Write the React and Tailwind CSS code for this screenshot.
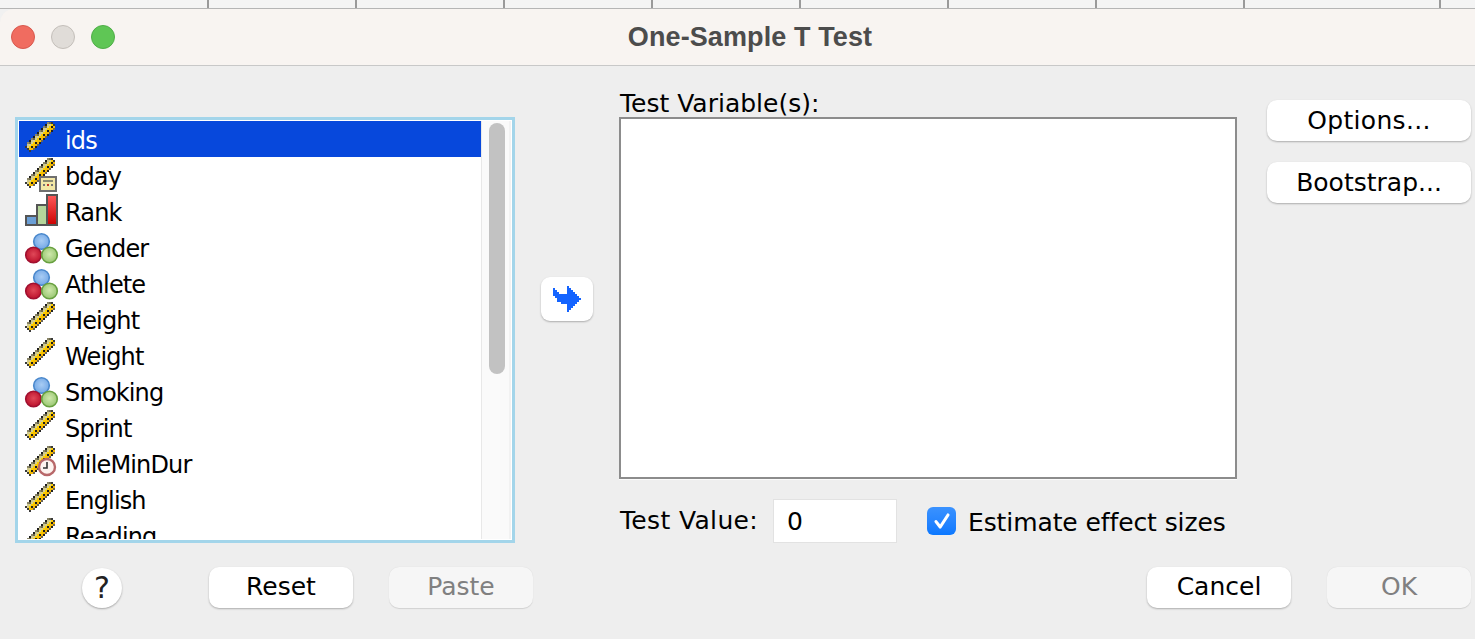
import React from 'react'

const FONT = 'font-["DejaVu_Sans",sans-serif]'

const VARIABLES = [
  { name: 'ids', type: 'scale' },
  { name: 'bday', type: 'date' },
  { name: 'Rank', type: 'ordinal' },
  { name: 'Gender', type: 'nominal' },
  { name: 'Athlete', type: 'nominal' },
  { name: 'Height', type: 'scale' },
  { name: 'Weight', type: 'scale' },
  { name: 'Smoking', type: 'nominal' },
  { name: 'Sprint', type: 'scale' },
  { name: 'MileMinDur', type: 'time' },
  { name: 'English', type: 'scale' },
  { name: 'Reading', type: 'scale' },
]

// pixel ruler, drawn on a 16x16 grid
function rulerPixels() {
  const out = []
  for (let x = 0; x < 16; x++) {
    for (let y = 0; y < 16; y++) {
      const d = x + y - 14
      const a = x - y
      if (Math.abs(d) > 3 || a < -12 || a > 13) continue
      if (Math.abs(d) === 3 && (a === 13 || a === -11)) continue
      let fill = '#f9c200'
      if (d === -3) fill = (a + 1) % 4 === 0 ? '#8a866a' : '#1c1c1c'
      else if (d === 3) fill = (a + 1) % 4 === 0 ? '#6a6458' : '#222222'
      else if (d === -2) fill = a % 4 === 0 ? '#6a664a' : '#cfc88c'
      else if (d === -1) fill = '#d8cf8e'
      else if (d === 0) fill = '#fdcf00'
      else if (d === 1) fill = (a + 1) % 4 === 0 ? '#1c1c1c' : '#f9c200'
      else if (d === 2) fill = '#f6b800'
      if (a === -12 || a === 13) fill = '#3a3a3a'
      out.push(<rect key={`${x}-${y}`} x={x} y={y} width="1" height="1" fill={fill} />)
    }
  }
  return out
}

function VarIcon({ type }) {
  if (type === 'ordinal') {
    return (
      <svg viewBox="0 0 32 32" className="w-8 h-8 shrink-0 overflow-visible">
        <rect x="1" y="22" width="11" height="9" fill="#6b9fd6" stroke="#555" strokeWidth="2" />
        <rect x="12" y="11" width="11" height="20" fill="#b5d69a" stroke="#555" strokeWidth="2" />
        <rect x="22" y="1" width="10" height="30" fill="url(#redBar)" stroke="#555" strokeWidth="2" />
      </svg>
    )
  }
  if (type === 'nominal') {
    return (
      <svg viewBox="0 0 32 32" className="w-8 h-8 shrink-0 overflow-visible">
        <circle cx="16.5" cy="11.5" r="7.8" fill="url(#blueBall)" stroke="#4a88cc" strokeWidth="1.6" />
        <circle cx="8.5" cy="25" r="7.8" fill="url(#redBall)" stroke="#a01030" strokeWidth="1.6" />
        <circle cx="24.5" cy="25" r="7.8" fill="url(#greenBall)" stroke="#68a040" strokeWidth="1.6" />
      </svg>
    )
  }
  return (
    <svg viewBox="0 0 16 16" className="w-8 h-8 shrink-0 overflow-visible" shapeRendering="crispEdges">
      {rulerPixels()}
      {type === 'date' && (
        <g>
          <rect x="7" y="9" width="9" height="8" fill="#6f6f6f" />
          <rect x="8" y="10" width="7" height="6" fill="#f3e8a6" />
          <rect x="9" y="11" width="5" height="1" fill="#8a8a70" />
          <rect x="9" y="13" width="1" height="1" fill="#777" />
          <rect x="11" y="13" width="1" height="1" fill="#c0392b" />
          <rect x="13" y="13" width="1" height="1" fill="#777" />
        </g>
      )}
      {type === 'time' && (
        <g shapeRendering="auto">
          <circle cx="11" cy="10.5" r="4" fill="#fdf3ef" stroke="#b8686a" strokeWidth="1.2" />
          <path d="M11 8v3h-2" fill="none" stroke="#333" strokeWidth="0.8" />
        </g>
      )}
    </svg>
  )
}

function IconDefs() {
  return (
    <svg className="w-0 h-0 block">
      <defs>
        <linearGradient id="redBar" x1="0" y1="0" x2="0" y2="1">
          <stop offset="0" stopColor="#ff5a5a" />
          <stop offset="1" stopColor="#cc0000" />
        </linearGradient>
        <radialGradient id="blueBall" cx="0.5" cy="0.45" r="0.6">
          <stop offset="0" stopColor="#a8ccf4" />
          <stop offset="1" stopColor="#6ea4e4" />
        </radialGradient>
        <radialGradient id="redBall" cx="0.5" cy="0.45" r="0.6">
          <stop offset="0" stopColor="#e04858" />
          <stop offset="1" stopColor="#b80c28" />
        </radialGradient>
        <radialGradient id="greenBall" cx="0.5" cy="0.45" r="0.6">
          <stop offset="0" stopColor="#cfe8ac" />
          <stop offset="1" stopColor="#94c46c" />
        </radialGradient>
      </defs>
    </svg>
  )
}

function ArrowIcon() {
  const rows = [
    [[7, 8]],
    [[0, 1], [7, 9]],
    [[0, 2], [7, 10]],
    [[0, 3], [7, 11]],
    [[0, 12]],
    [[1, 13]],
    [[2, 14]],
    [[2, 13]],
    [[4, 12]],
    [[7, 11]],
    [[7, 10]],
    [[7, 9]],
    [[7, 8]],
  ]
  return (
    <svg viewBox="0 0 14 13" className="w-7 h-[26px]" shapeRendering="crispEdges">
      {rows.map((spans, y) =>
        spans.map(([a, b]) => (
          <rect key={`${y}-${a}`} x={a} y={y} width={b - a} height="1" fill="#1464ff" />
        ))
      )}
    </svg>
  )
}

function Btn({ children, disabled, className = '' }) {
  return (
    <button
      className={`h-[41px] rounded-[10px] text-[25px] leading-none flex items-center justify-center ${
        disabled ? 'bg-[#f6f6f6] text-[#808080] shadow-[0_0.5px_1px_rgba(0,0,0,0.12)]' : 'bg-white text-black shadow-[0_1px_2px_rgba(0,0,0,0.28)]'
      } ${className}`}
    >
      {children}
    </button>
  )
}

export default function App() {
  return (
    <div className={`w-[1475px] h-[639px] overflow-hidden bg-[#f1f1f1] flex flex-col ${FONT}`}>
      <IconDefs />
      {/* window behind the dialog */}
      <div className="h-[9px] shrink-0 flex border-b border-[#b5b5b5] bg-[#f4f4f4]">
        <div className="w-[209px] border-r-2 border-[#9a9a9a]" />
        {[0, 1, 2, 3, 4, 5, 6].map((i) => (
          <div key={i} className="w-[148px] border-r-2 border-[#9a9a9a]" />
        ))}
        <div className="w-[196px] border-r-2 border-[#9a9a9a]" />
      </div>

      <div className="flex-1 flex flex-col rounded-tl-[14px] overflow-hidden bg-[#eeeeee]">
        {/* title bar */}
        <div className="h-[57px] shrink-0 bg-[#f8f4f1] border-b border-[#c8c8c8] flex items-center pl-[11px]">
          <div className="w-6 h-6 rounded-full bg-[#f06c60] border border-[#d8584e]" />
          <div className="w-6 h-6 rounded-full bg-[#e0dcd8] border border-[#c4bfba] ml-4" />
          <div className="w-6 h-6 rounded-full bg-[#5fc655] border border-[#4fae48] ml-4" />
          <div className="flex-1 text-center text-[27px] tracking-[0.1px] font-bold text-[#4c4c4c] font-['Liberation_Sans',sans-serif] pr-[90px]">
            One-Sample T Test
          </div>
        </div>

        <div className="flex pl-[15px]">
          {/* source variable list */}
          <div className="w-[500px] h-[426px] mt-[51px] shrink-0 border-[3px] border-[#a3d5ea] bg-white p-px flex overflow-hidden">
            <div className="w-[462px] shrink-0 overflow-hidden">
              {VARIABLES.map((v, i) => (
                <div
                  key={v.name}
                  className={`h-9 shrink-0 flex items-start pl-[6px] ${i === 0 ? 'bg-[#0748dc] text-white' : 'text-black'}`}
                >
                  <div className="pt-px">
                    <VarIcon type={v.type} />
                  </div>
                  <span className="ml-2 text-[24px] tracking-[-0.85px] leading-9 pt-[2px]">{v.name}</span>
                </div>
              ))}
            </div>
            <div className="flex-1 bg-[#fafafa] border-l border-[#e8e8e8] border-r-2 border-r-[#f2f2f2] pl-[7px] pt-[2px]">
              <div className="w-4 h-[251px] rounded-full bg-[#c2c2c2]" />
            </div>
          </div>

          {/* move button */}
          <div className="w-[104px] shrink-0 pl-[26px] pt-[211px]">
            <button className="w-[52px] h-[44px] rounded-[9px] bg-white shadow-[0_1px_2px_rgba(0,0,0,0.28)] flex items-center justify-center">
              <ArrowIcon />
            </button>
          </div>

          {/* test variables */}
          <div className="w-[618px] shrink-0 pt-[21px]">
            <div className="text-[25px] leading-[30px] pl-px pt-[2px] -mb-[2px] text-black">Test Variable(s):</div>
            <div className="h-[362px] bg-white border-2 border-[#8c8c8c] shadow-[0_1px_0_#fbfbfb]" />
            <div className="flex items-center mt-5 h-[44px]">
              <span className="text-[25px] tracking-[0.35px] w-[154px] pl-px text-black">Test Value:</span>
              <div className="w-[124px] h-[44px] bg-white border border-[#e2e2e2] flex items-center pl-[13px] pt-[2px] text-[25px] text-black">
                0
              </div>
              <div className="w-[29px] h-[28px] ml-[30px] rounded-[6px] bg-gradient-to-b from-[#3a92ff] to-[#0a78ff] flex items-center justify-center shrink-0">
                <svg viewBox="0 0 20 20" className="w-6 h-6">
                  <path d="M5 10.5 L8.5 15 L15 5" fill="none" stroke="white" strokeWidth="2.6" strokeLinecap="round" strokeLinejoin="round" />
                </svg>
              </div>
              <span className="ml-[12px] pt-[3px] text-[25px] tracking-[-0.1px] whitespace-nowrap text-black">Estimate effect sizes</span>
            </div>
          </div>

          {/* side buttons */}
          <div className="pl-[30px] pt-[34px] flex flex-col gap-[21px]">
            <Btn className="w-[204px] tracking-[0.3px]">Options...</Btn>
            <Btn className="w-[204px]">Bootstrap...</Btn>
          </div>
        </div>

        {/* bottom row */}
        <div className="flex items-center mt-[24px] h-[41px] pl-[82px]">
          <button className="w-10 h-10 rounded-full bg-white shadow-[0_1px_2px_rgba(0,0,0,0.3)] text-[30px] leading-none text-[#222] flex items-center justify-center">
            ?
          </button>
          <Btn className="w-[144px] ml-[87px] pb-[2px]">Reset</Btn>
          <Btn disabled className="w-[144px] ml-9 pb-[2px]">Paste</Btn>
          <Btn className="w-[144px] ml-[614px] pb-[2px]">Cancel</Btn>
          <Btn disabled className="w-[144px] ml-9 pb-[2px]">OK</Btn>
        </div>
      </div>
    </div>
  )
}
